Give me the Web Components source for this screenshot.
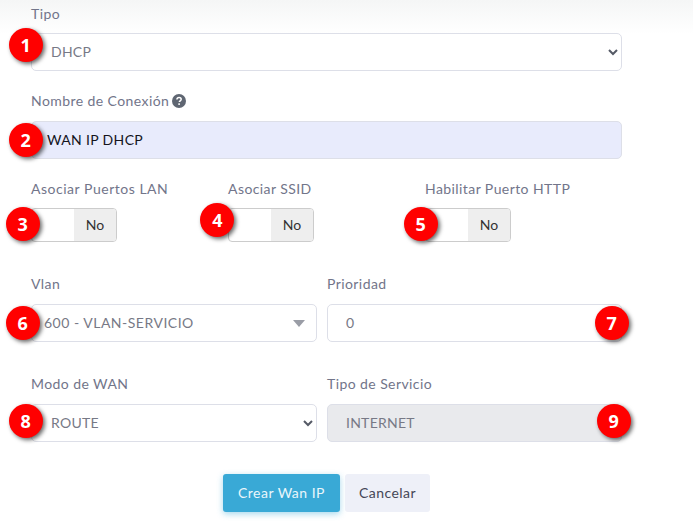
<!DOCTYPE html>
<html lang="es">
<head>
<meta charset="utf-8">
<title>Crear Wan IP</title>
<style>
    html, body { margin: 0; height: 100%; background: #fff; }
    body { font-family: "Lato", "Liberation Sans", sans-serif; }
</style>
</head>
<body>
<wan-form>
    <form-row style="--cols: 1fr; --after: 22px; --label-h: 17px; --label-gap: 11px">
        <form-field label="Tipo">
            <select-box text-left="19">DHCP</select-box>
            <step-badge n="1" x="-22.300" y="-5"></step-badge>
        </form-field>
    </form-row>
    <form-row style="--cols: 1fr; --after: 21px">
        <form-field label="Nombre de Conexión" help>
            <text-box filled>WAN IP DHCP</text-box>
            <step-badge n="2" x="-22.300" y="1.500"></step-badge>
        </form-field>
    </form-row>
    <form-row style="--cols: repeat(3, 197px); --after: 34px; --label-h: 17px; --label-gap: 11px">
        <form-field label="Asociar Puertos LAN" style="letter-spacing:.52px">
            <off-switch></off-switch>
            <step-badge n="3" x="-25.300" y="-1.300"></step-badge>
        </form-field>
        <form-field label="Asociar SSID">
            <off-switch></off-switch>
            <step-badge n="4" x="-27.700" y="-4.700"></step-badge>
        </form-field>
        <form-field label="Habilitar Puerto HTTP">
            <off-switch></off-switch>
            <step-badge n="5" x="-21.300" y="-1.300"></step-badge>
        </form-field>
    </form-row>
    <form-row style="--after: 34px">
        <form-field label="Vlan">
            <select-box caret text-left="12" style="letter-spacing:.5px">600 - VLAN-SERVICIO</select-box>
            <step-badge n="6" x="-25.300" y="1.700"></step-badge>
        </form-field>
        <form-field label="Prioridad">
            <text-box>0</text-box>
            <step-badge n="7" x="267.700" y="1.700"></step-badge>
        </form-field>
    </form-row>
    <form-row style="--after: 32px">
        <form-field label="Modo de WAN">
            <select-box text-left="19">ROUTE</select-box>
            <step-badge n="8" x="-22.300" y="0.300"></step-badge>
        </form-field>
        <form-field label="Tipo de Servicio">
            <text-box disabled>INTERNET</text-box>
            <step-badge n="9" x="269.700" y="0.300"></step-badge>
        </form-field>
    </form-row>
    <form-actions>
        <action-button primary>Crear Wan IP</action-button>
        <action-button>Cancelar</action-button>
    </form-actions>
</wan-form>

<script>
const boxBase = `
    box-sizing:border-box; height:38px; display:flex; align-items:center;
    border:1px solid #dddfe8; border-radius:5px; background:#fff;
    font-size:14px; letter-spacing:.25px; color:#777986;`;

customElements.define('wan-form', class extends HTMLElement {
    constructor() {
        super();
        this.attachShadow({ mode: 'open' }).innerHTML = `
            <style>
                :host{
                    display:block; box-sizing:border-box; height:531px; padding:5px 71px 0 31px;
                    background:linear-gradient(#f5f6f6, #fff 34px);
                    letter-spacing:.42px;
                }
            </style>
            <slot></slot>`;
    }
});

customElements.define('form-row', class extends HTMLElement {
    constructor() {
        super();
        this.attachShadow({ mode: 'open' }).innerHTML = `
            <style>
                :host{
                    display:grid; grid-template-columns:var(--cols, 286px 295px); column-gap:10px;
                    margin-bottom:var(--after, 0);
                }
                :host([style*="repeat"]){ column-gap:0 }
            </style>
            <slot></slot>`;
    }
});

customElements.define('form-field', class extends HTMLElement {
    constructor() {
        super();
        const help = this.hasAttribute('help') ? `
            <svg width="14" height="14" viewBox="0 0 14 14" aria-hidden="true">
                <circle cx="7" cy="7" r="7" fill="#5f6672"/>
                <path d="M4.900 5.500c.1-1.300 1-2 2.200-2 1.200 0 2.100.7 2.100 1.800 0 .9-.5 1.300-1.100 1.700-.5.3-.7.5-.7 1.100" fill="none" stroke="#fff" stroke-width="1.500"/>
                <rect x="6.300" y="9.300" width="1.600" height="1.600" rx=".3" fill="#fff"/>
            </svg>` : '';
        this.attachShadow({ mode: 'open' }).innerHTML = `
            <style>
                :host{ display:block; min-width:0 }
                label{
                    display:flex; align-items:center; gap:3px;
                    height:var(--label-h, 15px); margin-bottom:var(--label-gap, 13px);
                    font-size:14px; color:#72758a; white-space:nowrap;
                }
                #control{ position:relative }
            </style>
            <label>${this.getAttribute('label')}${help}</label>
            <div id="control"><slot></slot></div>`;
    }
});

customElements.define('select-box', class extends HTMLElement {
    constructor() {
        super();
        const caret = this.hasAttribute('caret');
        const arrow = caret
            ? `<svg width="12" height="7" viewBox="0 0 12 7" style="margin-right:11px"><path d="M0 0h12L6 7z" fill="#9a9da6"/></svg>`
            : `<svg width="10" height="7" viewBox="0 0 10 7" style="margin-right:3px"><path d="M1 1l4 4 4-4" fill="none" stroke="#555a66" stroke-width="2"/></svg>`;
        this.attachShadow({ mode: 'open' }).innerHTML = `
            <style>
                :host{ display:block; ${boxBase} justify-content:space-between; padding-left:${this.getAttribute('text-left')}px }
                #t{ padding-bottom:2px }
            </style>
            <span id="t"><slot></slot></span>${arrow}`;
    }
});

customElements.define('text-box', class extends HTMLElement {
    constructor() {
        super();
        this.attachShadow({ mode: 'open' }).innerHTML = `
            <style>
                :host{ display:block; ${boxBase} padding-left:18px; padding-bottom:2px }
                :host([filled]){ background:#e8ebfc; color:#14141c; padding-left:15px; letter-spacing:.35px }
                :host([disabled]){ background:#e9eaed }
            </style>
            <slot></slot>`;
    }
});

customElements.define('off-switch', class extends HTMLElement {
    constructor() {
        super();
        this.attachShadow({ mode: 'open' }).innerHTML = `
            <style>
                :host{
                    display:flex; justify-content:flex-end; box-sizing:border-box; width:86px; height:34px;
                    border:1px solid #ccc; border-radius:4px; background:#fff; overflow:hidden;
                    letter-spacing:0;
                }
                span{
                    width:42px; display:flex; align-items:center; justify-content:center;
                    background:#eee; font-size:14px; color:#333; padding-bottom:2px; box-sizing:border-box;
                }
            </style>
            <span>No</span>`;
    }
});

customElements.define('step-badge', class extends HTMLElement {
    constructor() {
        super();
        this.attachShadow({ mode: 'open' }).innerHTML = `
            <style>
                :host{
                    position:absolute; left:${this.getAttribute('x')}px; top:${this.getAttribute('y')}px;
                    width:34px; height:34px; border-radius:50%; background:#f00;
                    display:flex; align-items:center; justify-content:center;
                    box-shadow:2px 2px 4px rgba(0,0,0,.6); letter-spacing:0;
                    font:bold 18px "Open Sans", "DejaVu Sans", sans-serif; color:#fff;
                }
            </style>
            ${this.getAttribute('n')}`;
    }
});

customElements.define('form-actions', class extends HTMLElement {
    constructor() {
        super();
        this.attachShadow({ mode: 'open' }).innerHTML = `
            <style>
                :host{ display:flex; gap:5px; padding-left:192px }
            </style>
            <slot></slot>`;
    }
});

customElements.define('action-button', class extends HTMLElement {
    constructor() {
        super();
        this.attachShadow({ mode: 'open' }).innerHTML = `
            <style>
                :host{
                    display:flex; align-items:center; justify-content:center; box-sizing:border-box;
                    width:85px; height:38px; border-radius:3px; background:#eef0f8; padding-bottom:2px;
                    font-size:14px; letter-spacing:.45px; color:#454656; cursor:pointer;
                }
                :host([primary]){
                    width:117px; background:#39a9d6; color:#eaf6fb; letter-spacing:.5px;
                    box-shadow:0 2px 6px rgba(57,169,214,.45);
                }
            </style>
            <slot></slot>`;
    }
});
</script>
</body>
</html>
